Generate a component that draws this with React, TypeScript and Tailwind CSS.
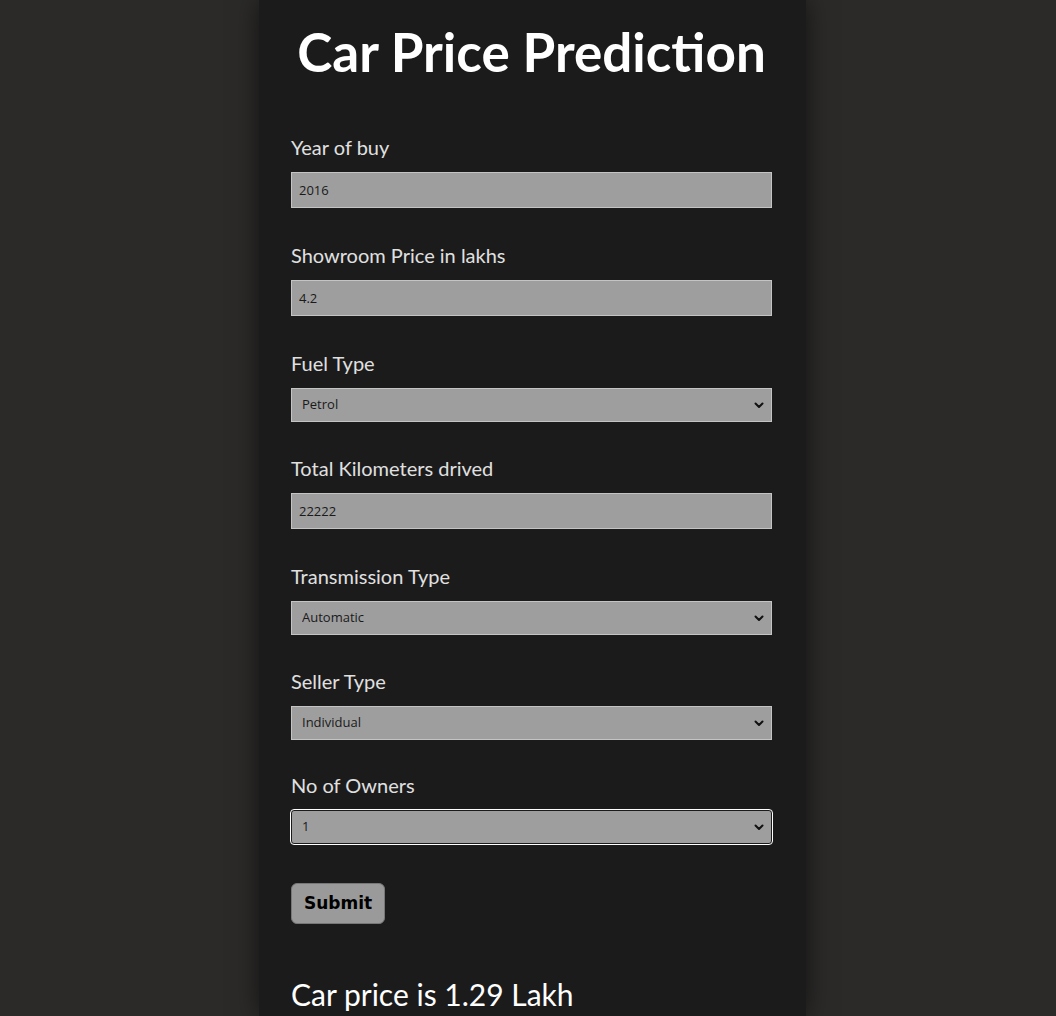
const Chevron = () => (
  <svg className="pointer-events-none absolute right-[8px] top-1/2 -translate-y-1/2 h-[10px] w-[10px]" viewBox="0 0 10 10" fill="none" stroke="#111" strokeWidth="2" strokeLinecap="round" strokeLinejoin="round">
    <path d="M1.5 3.5 5 7 8.5 3.5" />
  </svg>
)

const TextField = ({ label, value }: { label: string; value: string }) => (
  <div className="mb-[33px]">
    <label className="block text-[20px] leading-[28px] text-[#e0e0e0] mb-[11px]">{label}</label>
    <input
      defaultValue={value}
      className="block w-full h-[36px] px-[7px] bg-[#9e9e9e] border border-[#c4c4c4] text-[13px] text-[#1a1a1a] outline-none"
      style={{ fontFamily: '"Open Sans", sans-serif' }}
    />
  </div>
)

const SelectField = ({ label, value, options, focused }: { label: string; value: string; options: string[]; focused?: boolean }) => (
  <div className="mb-[32px]">
    <label className="block text-[20px] leading-[28px] text-[#e0e0e0] mb-[11px]">{label}</label>
    <div className="relative">
      <select
        defaultValue={value}
        className={
          "block w-full h-[34px] pl-[10px] bg-[#9e9e9e] text-[13px] text-[#1a1a1a] appearance-none " +
          (focused ? "border border-[#1c1b1c] outline outline-1 outline-white rounded-[3px]" : "border border-[#c4c4c4] outline-none")
        }
        style={{ fontFamily: '"Open Sans", sans-serif' }}
      >
        {options.map((o) => (
          <option key={o}>{o}</option>
        ))}
      </select>
      <Chevron />
    </div>
  </div>
)

export default function App() {
  return (
    <div className="min-h-screen bg-[#2b2a29] flex justify-center" style={{ fontFamily: 'Lato, "Noto Sans", sans-serif' }}>
      <div className="w-[547px] min-h-screen bg-[#1c1b1c] pl-[32px] pr-[34px] shadow-[0_0_24px_rgba(0,0,0,0.55)] ml-[9px]">
        <h1 className="text-center text-white font-bold text-[53px] leading-[60px] pt-[22px] mb-[51px]">Car Price Prediction</h1>
        <TextField label="Year of buy" value="2016" />
        <TextField label="Showroom Price in lakhs" value="4.2" />
        <SelectField label="Fuel Type" value="Petrol" options={["Petrol", "Diesel", "CNG"]} />
        <TextField label="Total Kilometers drived" value="22222" />
        <SelectField label="Transmission Type" value="Automatic" options={["Automatic", "Manual"]} />
        <SelectField label="Seller Type" value="Individual" options={["Individual", "Dealer"]} />
        <div className="-mt-[1px]">
          <SelectField label="No of Owners" value="1" options={["0", "1", "2", "3"]} focused />
        </div>
        <button
          className="mt-[7px] w-[94px] h-[41px] rounded-[6px] bg-[#9a9a9a] border border-[#777] text-[17px] font-bold text-black"
          style={{ fontFamily: '"DejaVu Sans", Verdana, sans-serif' }}
        >
          Submit
        </button>
        <p className="mt-[50px] text-[30px] leading-[40px] text-white">Car price is 1.29 Lakh</p>
      </div>
    </div>
  )
}
